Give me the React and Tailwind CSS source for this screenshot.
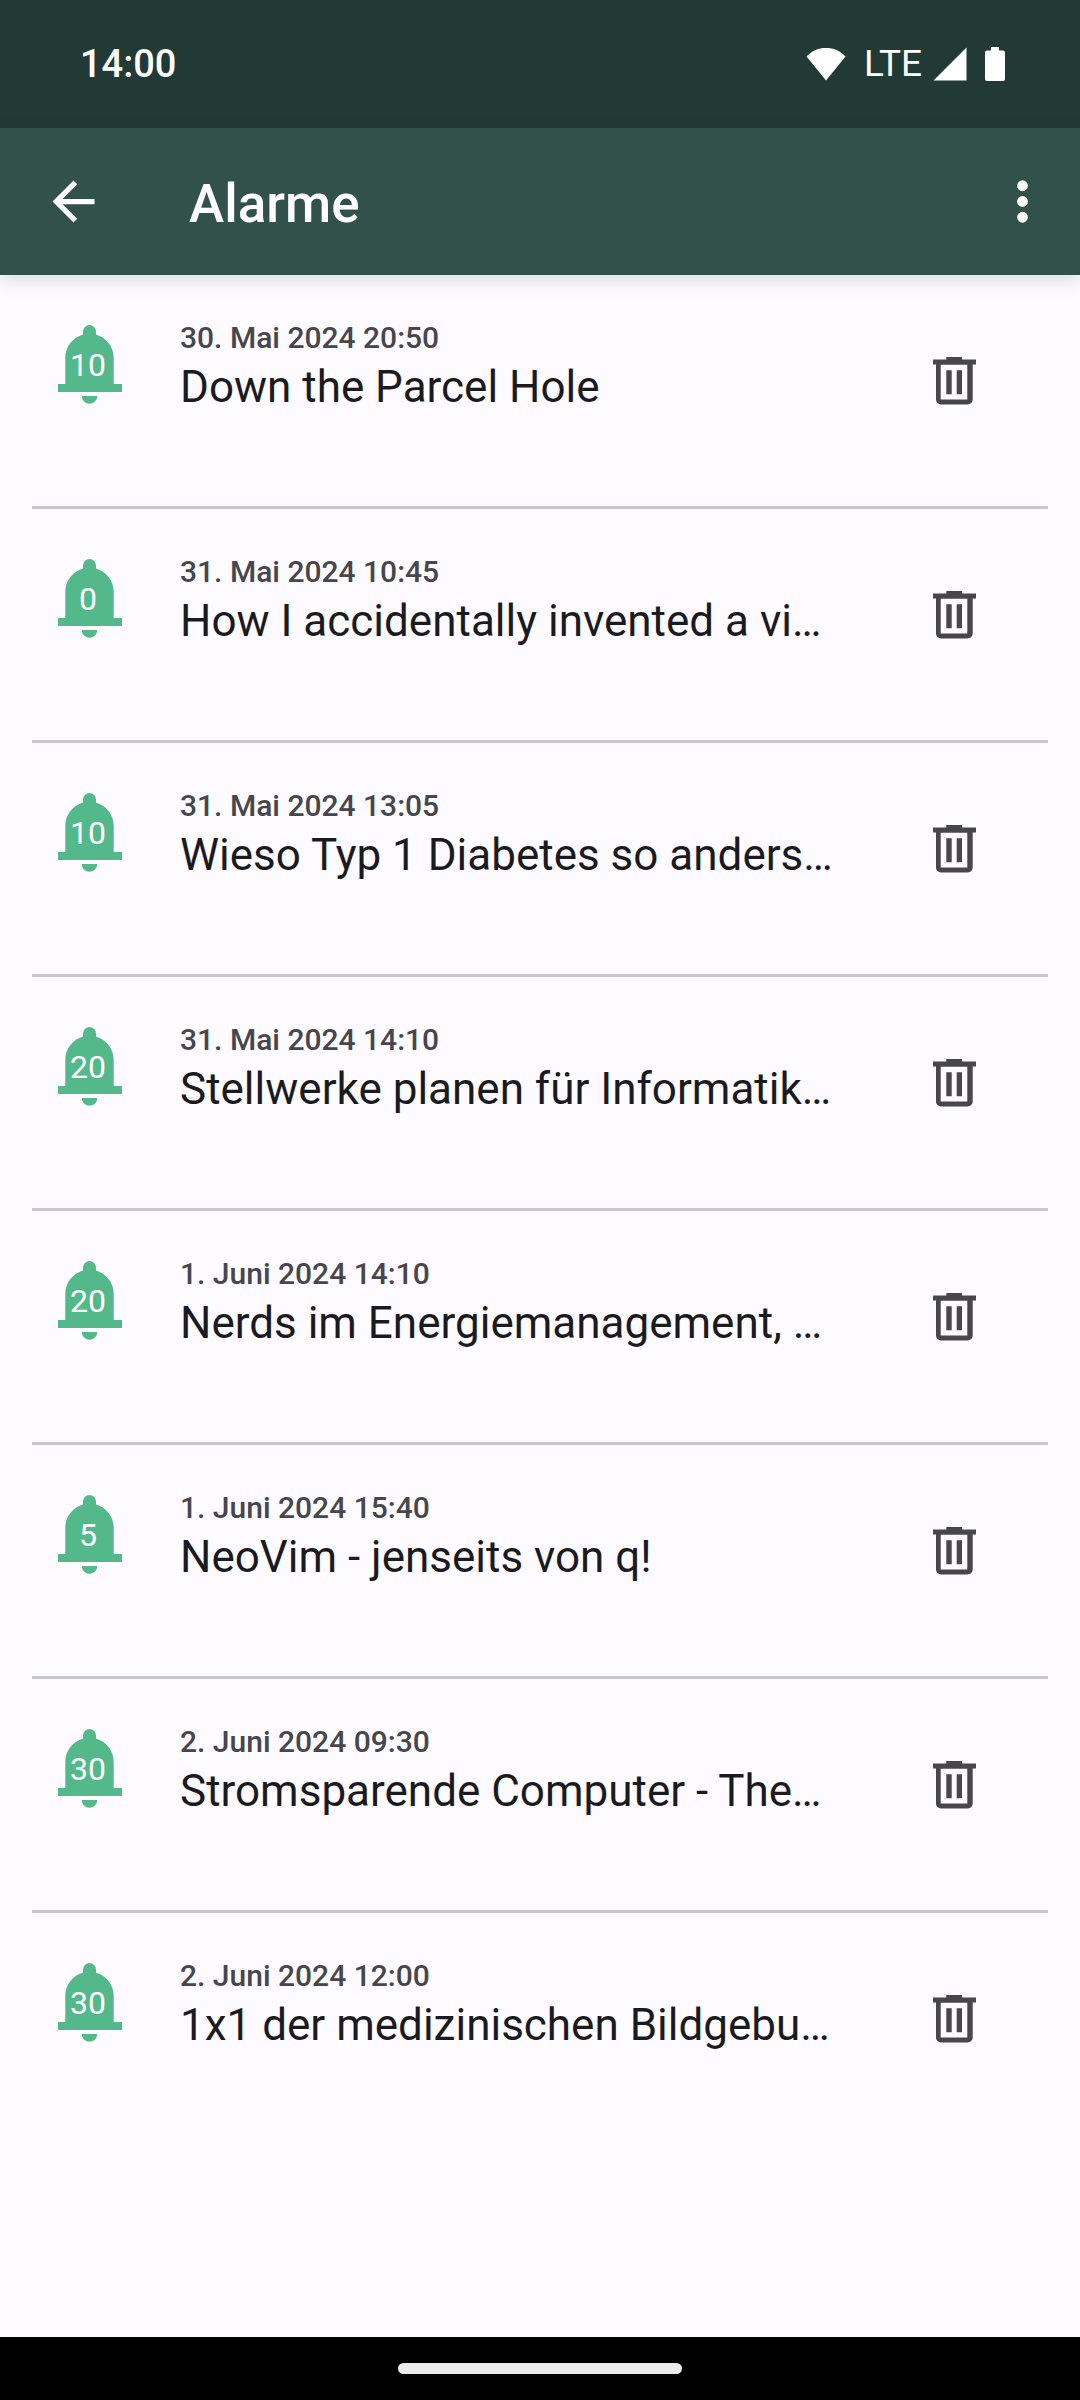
const alarms = [
  { minutes: 10, date: "30. Mai 2024 20:50", title: "Down the Parcel Hole" },
  { minutes: 0, date: "31. Mai 2024 10:45", title: "How I accidentally invented a vi…" },
  { minutes: 10, date: "31. Mai 2024 13:05", title: "Wieso Typ 1 Diabetes so anders…" },
  { minutes: 20, date: "31. Mai 2024 14:10", title: "Stellwerke planen für Informatik…" },
  { minutes: 20, date: "1. Juni 2024 14:10", title: "Nerds im Energiemanagement, …" },
  { minutes: 5, date: "1. Juni 2024 15:40", title: "NeoVim - jenseits von q!" },
  { minutes: 30, date: "2. Juni 2024 09:30", title: "Stromsparende Computer - The…" },
  { minutes: 30, date: "2. Juni 2024 12:00", title: "1x1 der medizinischen Bildgebu…" },
];

function StatusBar() {
  return (
    <div className="flex h-32 shrink-0 items-center bg-[#223a35] pr-[75px] pl-20 text-white">
      <time className="text-[38px] leading-10 font-medium">14:00</time>
      <div className="ml-auto flex items-center">
        <svg className="h-[34px] w-10" viewBox="0 0 40 34" fill="currentColor" aria-label="WLAN">
          <path d="M0.5 9.5C6 3.500 12.500 1 20 1s14 2.500 19.500 8.500L20 33.500z" />
        </svg>
        <span className="ml-[18px] text-[37px] leading-10">LTE</span>
        <svg className="ml-[11px] h-[34px] w-[34px]" viewBox="0 0 34 34" fill="currentColor" aria-label="Mobilfunk">
          <path d="M33.500 0.500v33H0.500z" />
        </svg>
        <svg className="ml-[18px] h-[34px] w-5" viewBox="0 0 20 34" fill="currentColor" aria-label="Akku">
          <path d="M6 0h8v3.500h4a2 2 0 0 1 2 2V32a2 2 0 0 1-2 2H2a2 2 0 0 1-2-2V5.500a2 2 0 0 1 2-2h4z" />
        </svg>
      </div>
    </div>
  );
}

function AppBar() {
  return (
    <header className="z-10 flex h-[147px] shrink-0 items-center bg-[#33514b] pr-[26px] pl-[42px] text-white shadow-[0_6px_18px_rgba(0,0,0,0.12)]">
      <button type="button" aria-label="Zurück">
        <svg className="size-[63px]" viewBox="0 0 24 24" fill="currentColor">
          <path d="M20 11H7.830l5.590-5.590L12 4l-8 8 8 8 1.410-1.410L7.830 13H20z" />
        </svg>
      </button>
      <h1 className="ml-[84px] pt-1 text-[53px] leading-[64px] font-medium">Alarme</h1>
      <button type="button" aria-label="Weitere Optionen" className="ml-auto">
        <svg className="size-[63px]" viewBox="0 0 24 24" fill="currentColor">
          <circle cx="12" cy="6" r="2.050" />
          <circle cx="12" cy="12" r="2.050" />
          <circle cx="12" cy="18" r="2.050" />
        </svg>
      </button>
    </header>
  );
}

function Bell({ minutes }) {
  return (
    <div className="relative h-[79px] w-16 shrink-0">
      <svg className="h-[79px] w-16 text-[#54b98a]" viewBox="0 0 64 79" fill="currentColor" aria-hidden="true">
        <path d="M25 9.500V6.500a6.500 6.500 0 0 1 13 0v3C48 12.500 55.700 21.500 55.700 32.500V59H64v8H0v-8h7.300V32.500C7.300 21.500 15 12.500 25 9.500z" />
        <path d="M23.700 71h15.600a7.800 7.800 0 0 1-15.600 0z" />
      </svg>
      <span className="absolute top-5 right-1 left-0 text-center text-[32px] leading-10 text-white">{minutes}</span>
    </div>
  );
}

function TrashIcon() {
  return (
    <svg className="h-12 w-[43px]" viewBox="0 0 43 48" fill="currentColor" aria-hidden="true">
      <path d="M13.300 0H29v2.500h14v5H0v-5h13.300z" />
      <path fillRule="evenodd" d="M3 7h36.700v35.500a5 5 0 0 1-5 5H8a5 5 0 0 1-5-5zM7.700 7.500v35h26.600v-35z" />
      <path d="M13.300 13.300h5.400v24h-5.400zM23.700 13.300H29v24h-5.300z" />
    </svg>
  );
}

function AlarmRow({ alarm }) {
  return (
    <li className="flex h-[234px] items-start border-b-[3px] border-[#c7c6cc] pr-[72px] pl-[26px] last:border-transparent">
      <div className="pt-[50px]">
        <Bell minutes={alarm.minutes} />
      </div>
      <div className="ml-[58px] min-w-0 flex-1 pt-[43px]">
        <p className="text-[30px] leading-10 font-medium text-[#47464c]">{alarm.date}</p>
        <h2 className="truncate text-[44px] leading-[58px] text-[#1b1b1f]">{alarm.title}</h2>
      </div>
      <button type="button" aria-label={`Alarm löschen: ${alarm.title}`} className="ml-6 pt-[82px] text-[#47464c]">
        <TrashIcon />
      </button>
    </li>
  );
}

export default function App() {
  return (
    <div className="flex min-h-screen flex-col bg-[#fdfbff] font-[Roboto,sans-serif]">
      <StatusBar />
      <AppBar />
      <main className="flex-1">
        <ul className="mx-8">
          {alarms.map((alarm) => (
            <AlarmRow key={alarm.date} alarm={alarm} />
          ))}
        </ul>
      </main>
      <footer className="flex h-[63px] shrink-0 items-center justify-center bg-black">
        <div className="h-[11px] w-[284px] rounded-full bg-[#ececec]" />
      </footer>
    </div>
  );
}
